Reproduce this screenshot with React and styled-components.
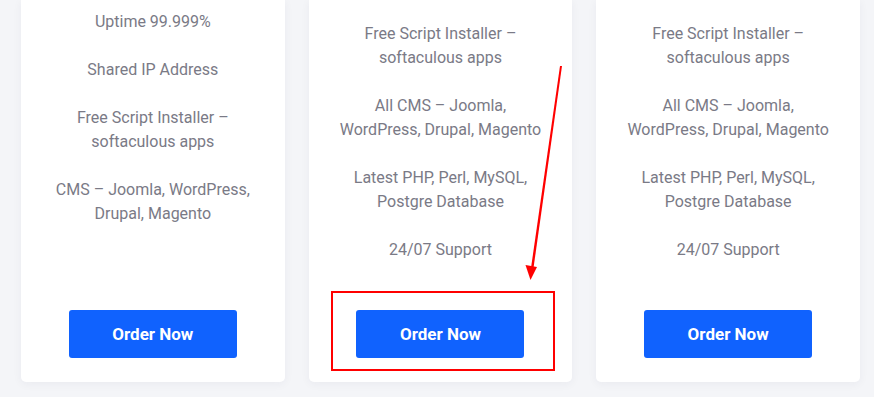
import React from "react";
import styled, { createGlobalStyle } from "styled-components";

const Global = createGlobalStyle`
  html, body { margin: 0; padding: 0; }
  body {
    background: #f4f5f8;
    font-family: Roboto, "Noto Sans", "Liberation Sans", sans-serif;
    overflow: hidden;
  }
`;

const Page = styled.div`
  position: relative;
  width: 874px;
  height: 397px;
  overflow: hidden;
`;

const Grid = styled.section`
  display: grid;
  grid-template-columns: repeat(3, 1fr);
  column-gap: 24px;
  padding: 0 14px 0 21px;
  align-items: stretch;
`;

const Card = styled.article`
  display: flex;
  flex-direction: column;
  align-items: center;
  background: #ffffff;
  border-radius: 0 0 5px 5px;
  box-shadow: 0 2px 10px rgba(30, 40, 70, 0.05);
  padding: ${(p) => p.$lead}px 26px 24px;
`;

const Features = styled.ul`
  list-style: none;
  margin: 0;
  padding: 0;
  display: flex;
  flex-direction: column;
  gap: 24px;
  width: 100%;
`;

const Feature = styled.li`
  font-size: 16px;
  line-height: 24px;
  color: #7a7a86;
  text-align: center;
`;

const OrderButton = styled.button`
  margin-top: auto;
  width: 168px;
  height: 48px;
  border: none;
  border-radius: 3px;
  background: #1062fe;
  color: #ffffff;
  font-family: Roboto, "Noto Sans", "Liberation Sans", sans-serif;
  font-size: 17px;
  font-weight: 700;
  cursor: pointer;
  flex-shrink: 0;
`;

const ButtonGap = styled.div`
  min-height: 48px;
  flex: 1;
`;

const Annotation = styled.svg`
  position: absolute;
  inset: 0;
  pointer-events: none;
`;

const plans = [
  {
    lead: 10,
    features: [
      "Uptime 99.999%",
      "Shared IP Address",
      "Free Script Installer – softaculous apps",
      "CMS – Joomla, WordPress, Drupal, Magento",
    ],
  },
  {
    lead: 22,
    features: [
      "Free Script Installer – softaculous apps",
      "All CMS – Joomla, WordPress, Drupal, Magento",
      "Latest PHP, Perl, MySQL, Postgre Database",
      "24/07 Support",
    ],
  },
  {
    lead: 22,
    features: [
      "Free Script Installer – softaculous apps",
      "All CMS – Joomla, WordPress, Drupal, Magento",
      "Latest PHP, Perl, MySQL, Postgre Database",
      "24/07 Support",
    ],
  },
];

export default function App() {
  return (
    <>
      <Global />
      <Page>
        <Grid>
          {plans.map((plan, i) => (
            <Card key={i} $lead={plan.lead}>
              <Features>
                {plan.features.map((f) => (
                  <Feature key={f}>{f}</Feature>
                ))}
              </Features>
              <ButtonGap />
              <OrderButton>Order Now</OrderButton>
            </Card>
          ))}
        </Grid>
        <Annotation width="874" height="397" viewBox="0 0 874 397">
          <rect x="332" y="292" width="222" height="78" fill="none" stroke="#ff0000" strokeWidth="2" />
          <polygon points="560,66 562,66 533.5,268 531,268" fill="#ff0000" />
          <polygon points="525.5,265 537,267 530.5,280" fill="#ff0000" />
        </Annotation>
      </Page>
    </>
  );
}
